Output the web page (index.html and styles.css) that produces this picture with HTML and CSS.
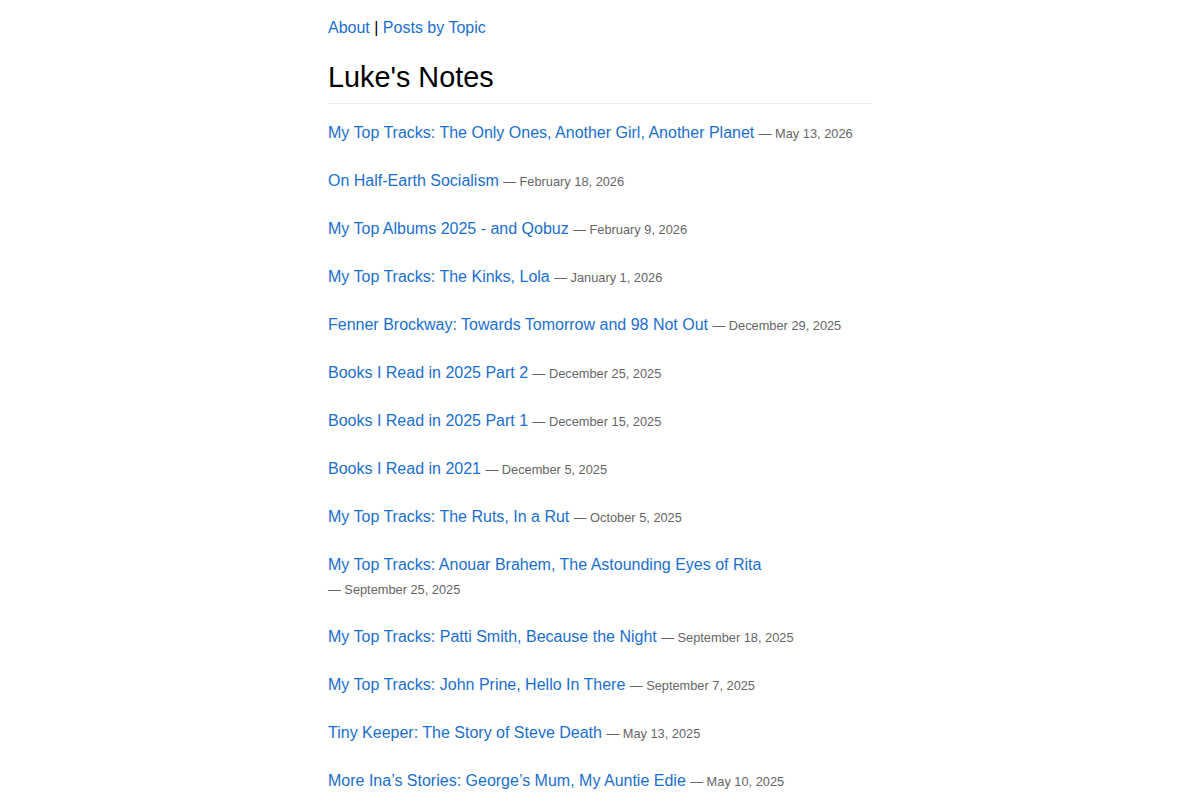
FILE: index.html
```html
<!DOCTYPE html>
<html lang="en">
<head>
    <meta charset="UTF-8">
    <meta name="viewport" content="width=device-width, initial-scale=1.0">
    <title>Luke's Notes</title>
    <link rel="stylesheet" href="styles.css">
</head>
<body>
    <div class="page">
        <nav class="topnav">
            <a href="#">About</a> | <a href="#">Posts by Topic</a>
        </nav>

        <h1 class="site-title">Luke's Notes</h1>

        <ul class="posts">
            <li><a href="#">My Top Tracks: The Only Ones, Another Girl, Another Planet</a> <span class="date">— May 13, 2026</span></li>
            <li><a href="#">On Half-Earth Socialism</a> <span class="date">— February 18, 2026</span></li>
            <li><a href="#">My Top Albums 2025 - and Qobuz</a> <span class="date">— February 9, 2026</span></li>
            <li><a href="#">My Top Tracks: The Kinks, Lola</a> <span class="date">— January 1, 2026</span></li>
            <li><a href="#">Fenner Brockway: Towards Tomorrow and 98 Not Out</a> <span class="date">— December 29, 2025</span></li>
            <li><a href="#">Books I Read in 2025 Part 2</a> <span class="date">— December 25, 2025</span></li>
            <li><a href="#">Books I Read in 2025 Part 1</a> <span class="date">— December 15, 2025</span></li>
            <li><a href="#">Books I Read in 2021</a> <span class="date">— December 5, 2025</span></li>
            <li><a href="#">My Top Tracks: The Ruts, In a Rut</a> <span class="date">— October 5, 2025</span></li>
            <li><a href="#">My Top Tracks: Anouar Brahem, The Astounding Eyes of Rita</a> <span class="date">— September 25, 2025</span></li>
            <li><a href="#">My Top Tracks: Patti Smith, Because the Night</a> <span class="date">— September 18, 2025</span></li>
            <li><a href="#">My Top Tracks: John Prine, Hello In There</a> <span class="date">— September 7, 2025</span></li>
            <li><a href="#">Tiny Keeper: The Story of Steve Death</a> <span class="date">— May 13, 2025</span></li>
            <li><a href="#">More Ina’s Stories: George’s Mum, My Auntie Edie</a> <span class="date">— May 10, 2025</span></li>
        </ul>
    </div>
</body>
</html>
```

FILE: styles.css
```css
body {
    margin: 0;
    font-family: "Liberation Sans", Arial, sans-serif;
    font-size: 16px;
    line-height: 24px;
    color: #000;
    background: #fff;
}

.page {
    max-width: 544px; /* 34em column */
    margin: 0 auto;
    padding: 16px 0;
}

a {
    color: #1a6fce;
    text-decoration: none;
}

.topnav {
    margin-bottom: 20px;
}

.site-title {
    margin: 0 0 17px;
    padding-bottom: 8px;
    font-size: 28.8px;
    font-weight: normal;
    line-height: 1.2;
    border-bottom: 1px solid #eee;
}

.posts {
    list-style: none;
    margin: 0;
    padding: 0;
}

.posts li {
    margin-bottom: 24px;
}

/* date drops to its own line as a whole when the title is long */
.date {
    color: #666;
    font-size: 0.8em;
    line-height: 1;
    white-space: nowrap;
}
```
